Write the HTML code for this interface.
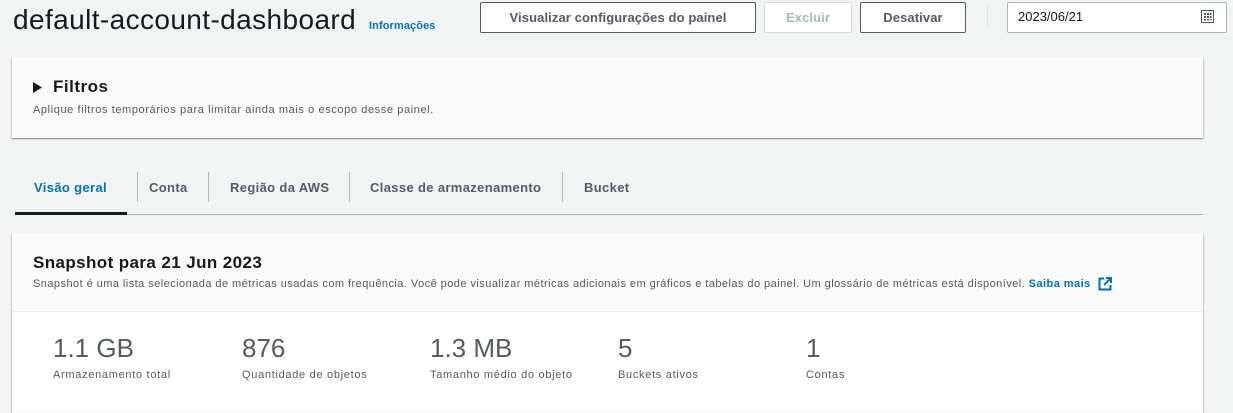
<!DOCTYPE html>
<html><head><meta charset="utf-8"><style>
*{box-sizing:border-box;margin:0;padding:0}
body{width:1233px;height:401px;overflow:hidden;background:#f2f3f3;font-family:"Liberation Sans",sans-serif;color:#16191f;position:relative}
.a{position:absolute;white-space:nowrap}
.btn{position:absolute;top:2px;height:31px;border:1px solid #545b64;border-radius:2px;background:#fff;font-weight:bold;font-size:13px;color:#545b64;display:flex;align-items:center;justify-content:center;letter-spacing:0.1px}
.panel{position:absolute;left:12px;width:1191px;background:#fafafa;box-shadow:0 1px 1px rgba(0,28,36,.3),1px 1px 1px rgba(0,28,36,.15),-1px 1px 1px rgba(0,28,36,.15)}
.tab{position:absolute;top:180px;font-size:13px;font-weight:bold;color:#545b64;letter-spacing:0.35px}
.sep{position:absolute;top:172px;width:1px;height:30px;background:#aab7b8}
.val{position:absolute;top:333px;font-size:26px;color:#545b64;font-weight:300}
.lbl{position:absolute;top:369px;font-size:11px;color:#545b64;letter-spacing:0.7px}
</style></head><body>
<div class="a" style="left:13px;top:4px;font-size:28px;letter-spacing:0.4px">default-account-dashboard</div>
<div class="a" style="left:369px;top:20px;font-size:11px;font-weight:bold;color:#0073bb;letter-spacing:0.1px">Informações</div>
<div class="btn" style="left:480px;width:276px">Visualizar configurações do painel</div>
<div class="btn" style="left:764px;width:88px;border-color:#d5dbdb;color:#aab7b8">Excluir</div>
<div class="btn" style="left:860px;width:106px">Desativar</div>
<div class="a" style="left:987px;top:4px;width:1px;height:24px;background:#e0e4e4"></div>
<div class="a" style="left:1007px;top:2px;width:220px;height:31px;background:#fff;border:1px solid #aab7b8;border-radius:2px"></div>
<div class="a" style="left:1018px;top:9px;font-size:13px">2023/06/21</div>
<svg class="a" style="left:1201px;top:10px" width="13" height="13" viewBox="0 0 13 13"><rect x="0.5" y="0.5" width="12" height="12" fill="none" stroke="#545b64"/><g fill="#545b64"><rect x="3" y="3" width="2" height="2"/><rect x="6" y="3" width="2" height="2"/><rect x="9" y="3" width="1.5" height="2"/><rect x="3" y="6" width="2" height="2"/><rect x="6" y="6" width="2" height="2"/><rect x="9" y="6" width="1.5" height="2"/><rect x="3" y="9" width="2" height="1.5"/><rect x="6" y="9" width="2" height="1.5"/><rect x="9" y="9" width="1.5" height="1.5"/></g></svg>

<div class="panel" style="top:57px;height:81px"></div>
<svg class="a" style="left:33px;top:82px" width="9" height="11"><path d="M0 0L9 5.5L0 11Z" fill="#16191f"/></svg>
<div class="a" style="left:53px;top:77px;font-size:17px;font-weight:bold;letter-spacing:0.5px">Filtros</div>
<div class="a" style="left:33px;top:104px;font-size:11px;color:#545b64;letter-spacing:0.6px">Aplique filtros temporários para limitar ainda mais o escopo desse painel.</div>

<div class="tab" style="left:34px;color:#0073bb">Visão geral</div>
<div class="sep" style="left:137px"></div>
<div class="tab" style="left:149px">Conta</div>
<div class="sep" style="left:208px"></div>
<div class="tab" style="left:230px">Região da AWS</div>
<div class="sep" style="left:349px"></div>
<div class="tab" style="left:370px">Classe de armazenamento</div>
<div class="sep" style="left:562px"></div>
<div class="tab" style="left:584px">Bucket</div>
<div class="a" style="left:15px;top:214px;width:1188px;height:1px;background:#aab7b8"></div>
<div class="a" style="left:15px;top:212px;width:112px;height:3px;background:#16191f"></div>

<div class="panel" style="top:233px;height:180px"></div>
<div class="a" style="left:12px;top:311px;width:1191px;height:100px;background:#fff;border-top:1px solid #eaeded"></div>
<div class="a" style="left:33px;top:253px;font-size:17px;font-weight:bold;letter-spacing:0.4px">Snapshot para 21 Jun 2023</div>
<div class="a" style="left:33px;top:278px;font-size:11px;color:#545b64;letter-spacing:0.45px">Snapshot é uma lista selecionada de métricas usadas com frequência. Você pode visualizar métricas adicionais em gráficos e tabelas do painel. Um glossário de métricas está disponível. <b style="color:#0073bb">Saiba mais</b></div>
<svg class="a" style="left:1098px;top:277px" width="14" height="14" viewBox="0 0 14 14"><path d="M6 1.5H1.5V12.5H12.5V8" fill="none" stroke="#0073bb" stroke-width="2"/><path d="M8 1H13V6M13 1L6 8" fill="none" stroke="#0073bb" stroke-width="2"/></svg>

<div class="val" style="left:53px">1.1 GB</div><div class="lbl" style="left:53px">Armazenamento total</div>
<div class="val" style="left:242px">876</div><div class="lbl" style="left:242px">Quantidade de objetos</div>
<div class="val" style="left:430px">1.3 MB</div><div class="lbl" style="left:430px">Tamanho médio do objeto</div>
<div class="val" style="left:618px">5</div><div class="lbl" style="left:618px">Buckets ativos</div>
<div class="val" style="left:806px">1</div><div class="lbl" style="left:806px">Contas</div>
</body></html>
